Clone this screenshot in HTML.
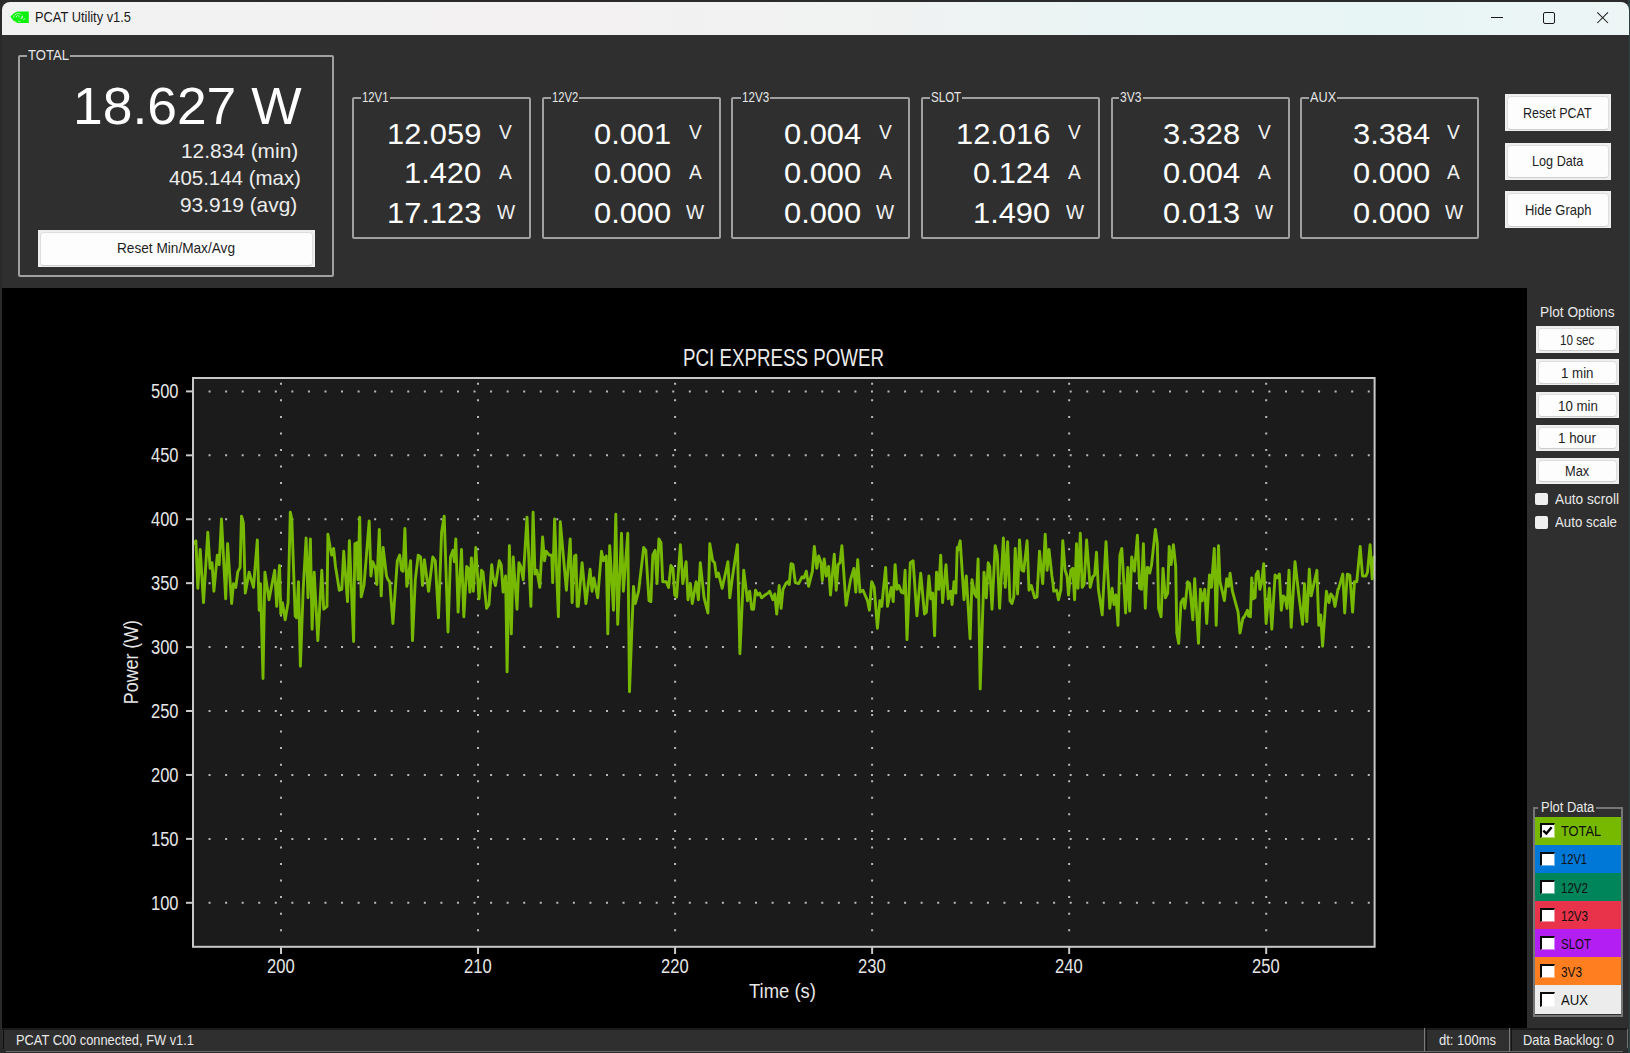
<!DOCTYPE html><html><head><meta charset="utf-8"><title>PCAT Utility v1.5</title><style>
html,body{margin:0;padding:0;width:1630px;height:1053px;overflow:hidden;background:#2a2a2a;}
body{position:relative;font-family:"Liberation Sans",sans-serif;}
.t{position:absolute;white-space:nowrap;transform-origin:0 0;}
.r{position:absolute;box-sizing:border-box;}
.btn{position:absolute;box-sizing:border-box;background:#eeeeee;}
.btn i{position:absolute;left:2px;top:2px;right:2px;bottom:1.5px;border:1px solid #dedede;border-bottom:1.5px solid #cdcdcd;border-radius:4px;background:#fdfdfd;box-sizing:border-box;}
.gb{position:absolute;box-sizing:border-box;border:2px solid #a0a0a0;border-radius:2px;}
.gl{position:absolute;background:#2f2f2f;height:6px;}
</style></head><body>
<div class="r" style="left:1628px;top:0px;width:2px;height:1053px;background:#2c4346;"></div>
<div class="r" style="left:2px;top:2px;width:1626.5px;height:1050px;background:#2f2f2f;border-radius:8px;"></div>
<div class="r" style="left:2px;top:2px;width:1626.5px;height:33px;background:linear-gradient(90deg,#f2f2f2 0px,#f3f1f2 600px,#f0f2f2 900px,#e9f4f4 1150px,#e8f5f5 1400px,#edf5f5 1626px);border-radius:8px 8px 0 0;"></div>
<svg style="position:absolute;left:8px;top:8px" width="24" height="18" viewBox="0 0 24 18">
<path d="M2.4 8.4 L5.6 5.6 L9.2 3.4 L20.8 3.4 L20.8 14.9 L9.2 14.9 L7.2 13.6 L5.2 12.6 Z" fill="#0af20a"/>
<path d="M5.3 9.8 Q5.8 6.6 8.6 5.8 Q11.6 5.2 13.2 6.4" fill="none" stroke="#aef5ae" stroke-width="0.9"/>
<path d="M7.9 9.6 Q8.6 7.4 10.3 7.2" fill="none" stroke="#b8f7b8" stroke-width="0.9"/>
<path d="M10.2 7.9 L11.7 8.9" fill="none" stroke="#d0f8d0" stroke-width="1"/>
<path d="M14.7 7.6 Q14.6 9.6 12.8 10.6" fill="none" stroke="#d6f8d6" stroke-width="1.1"/>
<path d="M15.3 12 L17.2 10.6" fill="none" stroke="#d0f8d0" stroke-width="1"/>
<path d="M9.8 13.4 L12.8 13.3" fill="none" stroke="#a8f3a8" stroke-width="0.8"/>
</svg>
<span class="t" style="left:35.00px;top:10.20px;font-size:14.54px;line-height:14.54px;color:#1a1a1a;transform:scaleX(0.8848);">PCAT Utility v1.5</span>
<svg style="position:absolute;left:1480px;top:0" width="150" height="35">
<line x1="11" y1="17.5" x2="23" y2="17.5" stroke="#1a1a1a" stroke-width="1"/>
<rect x="63.5" y="12.5" width="11" height="11" rx="1.5" fill="none" stroke="#1a1a1a" stroke-width="1"/>
<path d="M117.3 12.3 L128 23 M128 12.3 L117.3 23" stroke="#1a1a1a" stroke-width="1.05"/>
</svg>
<div class="gb" style="left:18px;top:55px;width:316px;height:221.5px;border-width:2px;border-color:#a0a0a0"></div>
<div class="gl" style="left:27px;top:54px;width:43px;height:4px;background:#2f2f2f"></div>
<span class="t" style="left:28.00px;top:48.20px;font-size:14.54px;line-height:14.54px;color:#e6e6e6;transform:scaleX(0.9012);">TOTAL</span>
<span class="t" style="left:73.10px;top:79.53px;font-size:52.33px;line-height:52.33px;color:#ffffff;transform:scaleX(1.0203);">18.627 W</span>
<span class="t" style="left:181.10px;top:140.63px;font-size:20.06px;line-height:20.06px;color:#ececec;transform:scaleX(1.0415);">12.834 (min)</span>
<span class="t" style="left:168.80px;top:167.63px;font-size:20.06px;line-height:20.06px;color:#ececec;transform:scaleX(1.0207);">405.144 (max)</span>
<span class="t" style="left:180.10px;top:194.53px;font-size:20.06px;line-height:20.06px;color:#ececec;transform:scaleX(1.0415);">93.919 (avg)</span>
<div class="btn" style="left:37.5px;top:229.5px;width:277.0px;height:37.5px"><i></i></div>
<span class="t" style="left:117.00px;top:240.95px;font-size:14.54px;line-height:14.54px;color:#1e1e1e;transform:scaleX(0.9383);">Reset Min/Max/Avg</span>
<div class="gb" style="left:352.1px;top:97px;width:178.89999999999998px;height:142px;border-width:2px;border-color:#a0a0a0"></div>
<div class="gl" style="left:361.4px;top:96px;width:28.5px;height:4px;background:#2f2f2f"></div>
<span class="t" style="left:362.40px;top:90.00px;font-size:14.54px;line-height:14.54px;color:#e6e6e6;transform:scaleX(0.7808);">12V1</span>
<span class="t" style="left:387.21px;top:118.79px;font-size:29.80px;line-height:29.80px;color:#ffffff;transform:scaleX(1.0350);">12.059</span>
<span class="t" style="left:404.32px;top:158.39px;font-size:29.80px;line-height:29.80px;color:#ffffff;transform:scaleX(1.0350);">1.420</span>
<span class="t" style="left:387.21px;top:197.99px;font-size:29.80px;line-height:29.80px;color:#ffffff;transform:scaleX(1.0350);">17.123</span>
<span class="t" style="left:499.20px;top:123.48px;font-size:19.77px;line-height:19.77px;color:#f0f0f0;transform:scaleX(0.9700);">V</span>
<span class="t" style="left:499.20px;top:163.08px;font-size:19.77px;line-height:19.77px;color:#f0f0f0;transform:scaleX(0.9700);">A</span>
<span class="t" style="left:496.54px;top:202.68px;font-size:19.77px;line-height:19.77px;color:#f0f0f0;transform:scaleX(0.9700);">W</span>
<div class="gb" style="left:541.9px;top:97px;width:178.89999999999998px;height:142px;border-width:2px;border-color:#a0a0a0"></div>
<div class="gl" style="left:551.0px;top:96px;width:28.2px;height:4px;background:#2f2f2f"></div>
<span class="t" style="left:552.00px;top:90.00px;font-size:14.54px;line-height:14.54px;color:#e6e6e6;transform:scaleX(0.7720);">12V2</span>
<span class="t" style="left:594.12px;top:118.79px;font-size:29.80px;line-height:29.80px;color:#ffffff;transform:scaleX(1.0350);">0.001</span>
<span class="t" style="left:594.12px;top:158.39px;font-size:29.80px;line-height:29.80px;color:#ffffff;transform:scaleX(1.0350);">0.000</span>
<span class="t" style="left:594.12px;top:197.99px;font-size:29.80px;line-height:29.80px;color:#ffffff;transform:scaleX(1.0350);">0.000</span>
<span class="t" style="left:689.00px;top:123.48px;font-size:19.77px;line-height:19.77px;color:#f0f0f0;transform:scaleX(0.9700);">V</span>
<span class="t" style="left:689.00px;top:163.08px;font-size:19.77px;line-height:19.77px;color:#f0f0f0;transform:scaleX(0.9700);">A</span>
<span class="t" style="left:686.34px;top:202.68px;font-size:19.77px;line-height:19.77px;color:#f0f0f0;transform:scaleX(0.9700);">W</span>
<div class="gb" style="left:731.4px;top:97px;width:178.89999999999998px;height:142px;border-width:2px;border-color:#a0a0a0"></div>
<div class="gl" style="left:740.8px;top:96px;width:29.1px;height:4px;background:#2f2f2f"></div>
<span class="t" style="left:741.80px;top:90.00px;font-size:14.54px;line-height:14.54px;color:#e6e6e6;transform:scaleX(0.7985);">12V3</span>
<span class="t" style="left:783.62px;top:118.79px;font-size:29.80px;line-height:29.80px;color:#ffffff;transform:scaleX(1.0350);">0.004</span>
<span class="t" style="left:783.62px;top:158.39px;font-size:29.80px;line-height:29.80px;color:#ffffff;transform:scaleX(1.0350);">0.000</span>
<span class="t" style="left:783.62px;top:197.99px;font-size:29.80px;line-height:29.80px;color:#ffffff;transform:scaleX(1.0350);">0.000</span>
<span class="t" style="left:878.50px;top:123.48px;font-size:19.77px;line-height:19.77px;color:#f0f0f0;transform:scaleX(0.9700);">V</span>
<span class="t" style="left:878.50px;top:163.08px;font-size:19.77px;line-height:19.77px;color:#f0f0f0;transform:scaleX(0.9700);">A</span>
<span class="t" style="left:875.84px;top:202.68px;font-size:19.77px;line-height:19.77px;color:#f0f0f0;transform:scaleX(0.9700);">W</span>
<div class="gb" style="left:921.1px;top:97px;width:178.89999999999998px;height:142px;border-width:2px;border-color:#a0a0a0"></div>
<div class="gl" style="left:929.7px;top:96px;width:32.2px;height:4px;background:#2f2f2f"></div>
<span class="t" style="left:930.70px;top:90.00px;font-size:14.54px;line-height:14.54px;color:#e6e6e6;transform:scaleX(0.7953);">SLOT</span>
<span class="t" style="left:956.21px;top:118.79px;font-size:29.80px;line-height:29.80px;color:#ffffff;transform:scaleX(1.0350);">12.016</span>
<span class="t" style="left:973.32px;top:158.39px;font-size:29.80px;line-height:29.80px;color:#ffffff;transform:scaleX(1.0350);">0.124</span>
<span class="t" style="left:973.32px;top:197.99px;font-size:29.80px;line-height:29.80px;color:#ffffff;transform:scaleX(1.0350);">1.490</span>
<span class="t" style="left:1068.20px;top:123.48px;font-size:19.77px;line-height:19.77px;color:#f0f0f0;transform:scaleX(0.9700);">V</span>
<span class="t" style="left:1068.20px;top:163.08px;font-size:19.77px;line-height:19.77px;color:#f0f0f0;transform:scaleX(0.9700);">A</span>
<span class="t" style="left:1065.54px;top:202.68px;font-size:19.77px;line-height:19.77px;color:#f0f0f0;transform:scaleX(0.9700);">W</span>
<div class="gb" style="left:1110.9px;top:97px;width:178.89999999999986px;height:142px;border-width:2px;border-color:#a0a0a0"></div>
<div class="gl" style="left:1119.1px;top:96px;width:23.5px;height:4px;background:#2f2f2f"></div>
<span class="t" style="left:1120.10px;top:90.00px;font-size:14.54px;line-height:14.54px;color:#e6e6e6;transform:scaleX(0.8310);">3V3</span>
<span class="t" style="left:1163.12px;top:118.79px;font-size:29.80px;line-height:29.80px;color:#ffffff;transform:scaleX(1.0350);">3.328</span>
<span class="t" style="left:1163.12px;top:158.39px;font-size:29.80px;line-height:29.80px;color:#ffffff;transform:scaleX(1.0350);">0.004</span>
<span class="t" style="left:1163.12px;top:197.99px;font-size:29.80px;line-height:29.80px;color:#ffffff;transform:scaleX(1.0350);">0.013</span>
<span class="t" style="left:1258.00px;top:123.48px;font-size:19.77px;line-height:19.77px;color:#f0f0f0;transform:scaleX(0.9700);">V</span>
<span class="t" style="left:1258.00px;top:163.08px;font-size:19.77px;line-height:19.77px;color:#f0f0f0;transform:scaleX(0.9700);">A</span>
<span class="t" style="left:1255.34px;top:202.68px;font-size:19.77px;line-height:19.77px;color:#f0f0f0;transform:scaleX(0.9700);">W</span>
<div class="gb" style="left:1300.3px;top:97px;width:178.9000000000001px;height:142px;border-width:2px;border-color:#a0a0a0"></div>
<div class="gl" style="left:1309.0px;top:96px;width:28.1px;height:4px;background:#2f2f2f"></div>
<span class="t" style="left:1310.00px;top:90.00px;font-size:14.54px;line-height:14.54px;color:#e6e6e6;transform:scaleX(0.8738);">AUX</span>
<span class="t" style="left:1352.52px;top:118.79px;font-size:29.80px;line-height:29.80px;color:#ffffff;transform:scaleX(1.0350);">3.384</span>
<span class="t" style="left:1352.52px;top:158.39px;font-size:29.80px;line-height:29.80px;color:#ffffff;transform:scaleX(1.0350);">0.000</span>
<span class="t" style="left:1352.52px;top:197.99px;font-size:29.80px;line-height:29.80px;color:#ffffff;transform:scaleX(1.0350);">0.000</span>
<span class="t" style="left:1447.40px;top:123.48px;font-size:19.77px;line-height:19.77px;color:#f0f0f0;transform:scaleX(0.9700);">V</span>
<span class="t" style="left:1447.40px;top:163.08px;font-size:19.77px;line-height:19.77px;color:#f0f0f0;transform:scaleX(0.9700);">A</span>
<span class="t" style="left:1444.74px;top:202.68px;font-size:19.77px;line-height:19.77px;color:#f0f0f0;transform:scaleX(0.9700);">W</span>
<div class="btn" style="left:1505.2px;top:94.1px;width:105.79999999999995px;height:37.099999999999994px"><i></i></div>
<span class="t" style="left:1523.20px;top:105.17px;font-size:15.41px;line-height:15.41px;color:#1e1e1e;transform:scaleX(0.8121);">Reset PCAT</span>
<div class="btn" style="left:1505.2px;top:143px;width:105.79999999999995px;height:36.900000000000006px"><i></i></div>
<span class="t" style="left:1532.40px;top:153.47px;font-size:15.41px;line-height:15.41px;color:#1e1e1e;transform:scaleX(0.8217);">Log Data</span>
<div class="btn" style="left:1505.2px;top:191.3px;width:105.79999999999995px;height:37.0px"><i></i></div>
<span class="t" style="left:1524.90px;top:201.67px;font-size:15.41px;line-height:15.41px;color:#1e1e1e;transform:scaleX(0.8426);">Hide Graph</span>
<div class="r" style="left:2px;top:288.4px;width:1524.5px;height:739.6px;background:#000000;"></div>
<svg style="position:absolute;left:0;top:0" width="1630" height="1053" viewBox="0 0 1630 1053">
<rect x="193.0" y="378.0" width="1181.6" height="568.8" fill="#1b1b1b"/>
<line x1="208.56" y1="391.40" x2="1372.6" y2="391.40" stroke="#b8b8b8" stroke-width="2" stroke-dasharray="2 14.56"/>
<line x1="208.56" y1="455.32" x2="1372.6" y2="455.32" stroke="#b8b8b8" stroke-width="2" stroke-dasharray="2 14.56"/>
<line x1="208.56" y1="519.25" x2="1372.6" y2="519.25" stroke="#b8b8b8" stroke-width="2" stroke-dasharray="2 14.56"/>
<line x1="208.56" y1="583.17" x2="1372.6" y2="583.17" stroke="#b8b8b8" stroke-width="2" stroke-dasharray="2 14.56"/>
<line x1="208.56" y1="647.10" x2="1372.6" y2="647.10" stroke="#b8b8b8" stroke-width="2" stroke-dasharray="2 14.56"/>
<line x1="208.56" y1="711.02" x2="1372.6" y2="711.02" stroke="#b8b8b8" stroke-width="2" stroke-dasharray="2 14.56"/>
<line x1="208.56" y1="774.95" x2="1372.6" y2="774.95" stroke="#b8b8b8" stroke-width="2" stroke-dasharray="2 14.56"/>
<line x1="208.56" y1="838.88" x2="1372.6" y2="838.88" stroke="#b8b8b8" stroke-width="2" stroke-dasharray="2 14.56"/>
<line x1="208.56" y1="902.80" x2="1372.6" y2="902.80" stroke="#b8b8b8" stroke-width="2" stroke-dasharray="2 14.56"/>
<line x1="281.00" y1="931.24" x2="281.00" y2="380.0" stroke="#b8b8b8" stroke-width="2" stroke-dasharray="2 14.56"/>
<line x1="478.04" y1="931.24" x2="478.04" y2="380.0" stroke="#b8b8b8" stroke-width="2" stroke-dasharray="2 14.56"/>
<line x1="675.08" y1="931.24" x2="675.08" y2="380.0" stroke="#b8b8b8" stroke-width="2" stroke-dasharray="2 14.56"/>
<line x1="872.12" y1="931.24" x2="872.12" y2="380.0" stroke="#b8b8b8" stroke-width="2" stroke-dasharray="2 14.56"/>
<line x1="1069.16" y1="931.24" x2="1069.16" y2="380.0" stroke="#b8b8b8" stroke-width="2" stroke-dasharray="2 14.56"/>
<line x1="1266.20" y1="931.24" x2="1266.20" y2="380.0" stroke="#b8b8b8" stroke-width="2" stroke-dasharray="2 14.56"/>
<polyline points="193.5,543.7 195.9,540.8 197.8,588.3 200.2,549.4 203.5,602.6 207.8,532.3 210.1,568.4 212.0,562.7 213.9,591.2 217.3,555.1 219.2,564.6 221.5,519.0 225.7,598.8 227.6,543.7 231.6,603.5 233.5,583.6 235.8,587.4 237.7,572.2 240.1,567.4 241.5,516.1 243.4,522.8 245.3,593.1 249.1,572.2 253.5,587.4 257.3,539.9 259.2,610.2 260.5,583.6 263.0,678.5 264.9,572.2 269.0,599.7 274.7,570.3 276.7,606.4 279.5,565.5 280.8,614.0 282.4,602.6 285.2,619.7 288.1,602.6 290.3,512.3 291.8,519.0 295.2,615.9 296.6,617.8 298.5,581.7 300.4,666.2 303.2,589.3 306.1,538.0 308.0,597.8 310.4,538.9 312.1,629.2 314.2,572.2 317.8,640.6 321.8,570.3 323.7,609.2 327.0,606.4 327.9,534.2 330.2,547.5 331.7,555.1 333.6,548.4 335.5,566.5 339.3,590.2 341.8,589.3 343.7,551.3 347.5,601.6 349.4,540.8 353.6,641.5 354.9,543.7 356.8,542.7 358.0,579.8 359.7,517.1 361.2,596.9 364.0,585.5 369.2,520.9 370.9,576.0 372.6,561.7 375.5,568.4 376.8,584.5 379.3,529.4 381.2,595.9 383.1,547.5 386.5,576.0 388.0,579.8 389.7,581.7 392.9,623.5 397.3,560.8 399.7,555.1 401.6,570.3 403.0,571.2 404.9,528.5 406.8,586.4 410.6,560.8 412.5,640.6 415.3,579.8 418.2,555.1 420.6,557.0 422.5,585.5 424.4,559.8 428.6,591.2 432.8,557.0 435.3,560.8 438.5,617.8 441.6,532.3 444.2,516.1 448.0,632.0 450.5,557.0 453.0,550.3 454.3,561.7 455.8,538.9 458.1,612.1 461.5,549.4 463.8,616.8 466.7,566.5 468.2,568.4 469.9,592.1 471.4,557.9 473.3,591.2 475.8,547.5 479.0,598.8 481.5,570.3 483.0,572.2 483.7,579.8 486.6,608.3 489.0,604.5 491.7,564.6 493.2,577.9 495.5,585.5 499.3,560.8 501.2,564.6 503.1,592.1 505.6,576.0 507.1,671.9 509.4,545.6 511.3,633.9 513.2,557.0 517.0,609.2 518.9,562.7 520.8,566.5 523.2,579.8 527.0,517.1 530.9,606.4 533.1,512.3 535.0,574.1 536.9,570.3 539.8,587.4 542.6,537.0 544.5,560.8 546.1,551.3 549.3,555.1 551.8,555.1 552.7,582.6 554.6,519.0 558.4,616.8 560.3,521.8 566.4,590.2 570.2,538.9 572.1,602.6 574.6,556.0 575.9,555.1 577.2,606.4 578.3,606.4 582.1,562.7 585.9,603.5 590.1,569.3 592.0,591.2 593.9,577.9 597.7,597.8 601.5,551.3 603.4,560.8 606.3,556.0 607.8,633.9 609.7,545.6 613.5,610.2 615.8,514.2 617.7,624.4 621.5,533.2 623.4,591.2 627.8,533.2 629.5,691.8 633.5,586.4 635.4,603.5 638.6,591.2 643.7,547.5 645.8,550.3 649.0,600.7 650.9,601.6 652.8,555.1 655.1,550.3 657.0,583.6 658.9,538.9 661.0,542.7 662.7,581.7 666.2,581.7 668.6,587.4 670.9,565.5 673.0,568.4 674.7,595.0 676.6,596.9 680.4,544.6 682.8,583.6 686.1,561.7 688.0,599.7 690.4,583.6 692.3,603.5 696.1,581.7 698.4,599.7 700.3,562.7 704.1,597.8 707.9,613.0 709.8,543.7 712.7,560.8 714.6,562.7 716.5,576.9 718.4,573.1 722.2,588.3 727.9,561.7 729.8,597.8 732.6,576.0 737.4,544.6 739.9,653.8 743.7,570.3 747.5,600.7 749.7,591.2 751.7,609.2 753.6,609.2 755.5,590.2 757.7,595.0 759.6,593.1 761.5,597.8 765.0,595.0 768.0,593.1 769.7,591.2 772.9,599.7 774.8,594.0 776.7,614.0 779.2,585.5 781.1,608.3 783.0,589.3 785.8,583.6 787.7,581.7 789.2,584.5 791.1,563.6 793.0,564.6 795.3,582.6 798.7,583.6 802.0,576.9 803.9,577.9 806.3,571.2 808.6,586.4 812.4,571.2 814.3,546.5 816.8,568.4 818.7,556.0 821.0,562.7 822.3,580.7 824.2,558.9 826.3,576.0 828.6,566.5 830.5,595.0 834.3,554.1 836.2,590.2 838.1,564.6 840.0,562.7 841.9,545.6 846.1,605.4 850.5,579.8 853.9,568.4 855.8,592.1 857.7,559.8 860.0,592.1 863.0,590.2 867.5,600.7 869.4,610.2 871.7,581.7 874.2,587.4 877.4,628.2 879.9,600.7 881.8,606.4 885.6,567.4 887.5,606.4 891.3,587.4 893.2,601.6 895.1,564.6 897.0,589.3 898.9,585.5 901.3,592.1 903.6,593.1 905.1,570.3 907.0,639.6 910.3,562.7 913.1,560.8 916.9,615.9 920.7,573.1 924.5,614.0 926.4,612.1 928.9,576.0 930.8,598.8 932.7,593.1 934.6,635.8 936.5,572.2 938.8,589.3 940.7,555.1 942.6,602.6 946.0,564.6 948.3,598.8 950.8,591.2 952.1,604.5 954.0,581.7 955.9,593.1 957.2,547.5 957.8,550.3 960.2,540.8 964.0,599.7 966.3,576.0 970.1,638.7 972.0,579.8 974.3,593.1 976.4,596.9 978.1,558.9 980.2,689.0 984.0,572.2 986.3,597.8 988.2,562.7 989.7,566.5 992.0,609.2 995.2,545.6 997.3,555.1 999.6,608.3 1003.4,538.0 1005.3,587.4 1007.6,541.8 1010.0,600.7 1011.9,603.5 1013.8,596.9 1015.2,548.4 1017.6,594.0 1019.5,539.9 1021.8,570.3 1023.7,571.2 1027.1,540.8 1029.0,590.2 1031.3,585.5 1034.7,597.8 1037.0,596.9 1039.5,551.3 1042.7,583.6 1045.2,534.2 1047.1,570.3 1049.0,549.4 1051.9,576.0 1053.0,583.6 1053.7,591.2 1056.6,590.2 1058.5,599.7 1060.9,589.3 1062.8,540.8 1065.1,570.3 1067.0,576.0 1068.5,595.0 1070.8,570.3 1072.7,568.4 1074.6,599.7 1076.5,543.7 1078.0,588.3 1080.3,533.2 1082.2,587.4 1084.1,584.5 1086.6,539.9 1090.2,587.4 1092.7,576.9 1094.6,575.0 1096.5,552.2 1098.4,589.3 1102.2,614.9 1106.0,541.8 1109.8,608.3 1112.1,588.3 1114.0,604.5 1115.9,595.0 1118.0,625.4 1119.9,555.1 1121.8,548.4 1125.6,613.0 1127.8,567.4 1129.7,611.1 1131.7,557.0 1134.5,571.2 1137.4,535.1 1139.6,588.3 1141.5,589.3 1143.4,543.7 1145.3,608.3 1147.2,567.4 1147.8,567.4 1149.7,573.1 1151.6,564.6 1155.4,529.4 1157.3,542.7 1158.6,608.3 1161.1,616.8 1163.0,568.4 1165.4,597.8 1167.7,593.1 1169.2,546.5 1171.1,564.6 1173.4,544.6 1175.7,566.5 1176.8,633.0 1178.7,643.4 1181.0,602.6 1183.3,598.8 1184.8,608.3 1187.7,581.7 1189.6,583.6 1192.8,619.7 1194.7,578.8 1198.5,643.4 1200.4,589.3 1202.3,600.7 1204.8,589.3 1206.7,623.5 1209.5,575.0 1211.4,587.4 1214.3,548.4 1216.2,625.4 1218.5,545.6 1220.0,581.7 1224.4,600.7 1226.7,578.8 1228.6,586.4 1230.1,573.1 1232.4,591.2 1238.1,612.1 1240.0,633.0 1243.0,617.8 1243.7,617.8 1247.5,610.2 1248.5,615.9 1250.4,616.8 1251.7,577.9 1253.2,598.8 1255.1,597.8 1256.1,575.0 1258.0,571.2 1259.9,589.3 1261.8,581.7 1263.7,563.6 1266.1,623.5 1269.4,588.3 1271.8,629.2 1275.1,575.0 1277.0,577.9 1279.4,574.1 1281.3,610.2 1283.2,595.9 1285.1,597.8 1287.0,608.3 1289.0,570.3 1291.2,627.3 1295.0,561.7 1298.8,595.0 1302.6,624.4 1304.5,583.6 1306.8,621.6 1309.3,569.3 1311.2,595.9 1316.9,570.3 1318.8,625.4 1320.7,614.9 1322.6,646.2 1326.4,591.2 1328.9,602.6 1330.8,594.0 1333.1,596.9 1335.0,606.4 1338.0,589.3 1338.4,589.3 1342.8,574.1 1344.7,613.0 1347.3,574.1 1349.8,575.0 1352.6,612.1 1354.5,581.7 1356.8,581.7 1360.2,546.5 1362.5,576.0 1365.9,576.0 1367.5,572.2 1370.1,544.6 1372.2,578.8 1374.0,557.0" fill="none" stroke="#76b900" stroke-width="2.9" stroke-linejoin="round" stroke-linecap="round"/>
<rect x="193.0" y="378.0" width="1181.6" height="568.8" fill="none" stroke="#c8c8c8" stroke-width="2"/>
<line x1="186" y1="391.40" x2="193.0" y2="391.40" stroke="#c8c8c8" stroke-width="2"/>
<line x1="186" y1="455.32" x2="193.0" y2="455.32" stroke="#c8c8c8" stroke-width="2"/>
<line x1="186" y1="519.25" x2="193.0" y2="519.25" stroke="#c8c8c8" stroke-width="2"/>
<line x1="186" y1="583.17" x2="193.0" y2="583.17" stroke="#c8c8c8" stroke-width="2"/>
<line x1="186" y1="647.10" x2="193.0" y2="647.10" stroke="#c8c8c8" stroke-width="2"/>
<line x1="186" y1="711.02" x2="193.0" y2="711.02" stroke="#c8c8c8" stroke-width="2"/>
<line x1="186" y1="774.95" x2="193.0" y2="774.95" stroke="#c8c8c8" stroke-width="2"/>
<line x1="186" y1="838.88" x2="193.0" y2="838.88" stroke="#c8c8c8" stroke-width="2"/>
<line x1="186" y1="902.80" x2="193.0" y2="902.80" stroke="#c8c8c8" stroke-width="2"/>
<line x1="281.00" y1="946.8" x2="281.00" y2="954" stroke="#c8c8c8" stroke-width="2"/>
<line x1="478.04" y1="946.8" x2="478.04" y2="954" stroke="#c8c8c8" stroke-width="2"/>
<line x1="675.08" y1="946.8" x2="675.08" y2="954" stroke="#c8c8c8" stroke-width="2"/>
<line x1="872.12" y1="946.8" x2="872.12" y2="954" stroke="#c8c8c8" stroke-width="2"/>
<line x1="1069.16" y1="946.8" x2="1069.16" y2="954" stroke="#c8c8c8" stroke-width="2"/>
<line x1="1266.20" y1="946.8" x2="1266.20" y2="954" stroke="#c8c8c8" stroke-width="2"/>
</svg>
<span class="t" style="left:682.70px;top:345.96px;font-size:24.27px;line-height:24.27px;color:#ebebeb;transform:scaleX(0.7721);">PCI EXPRESS POWER</span>
<span class="t" style="left:151.30px;top:381.18px;font-size:20.35px;line-height:20.35px;color:#e6e6e6;transform:scaleX(0.8104);">500</span>
<span class="t" style="left:151.30px;top:445.11px;font-size:20.35px;line-height:20.35px;color:#e6e6e6;transform:scaleX(0.8104);">450</span>
<span class="t" style="left:151.30px;top:509.03px;font-size:20.35px;line-height:20.35px;color:#e6e6e6;transform:scaleX(0.8104);">400</span>
<span class="t" style="left:151.30px;top:572.96px;font-size:20.35px;line-height:20.35px;color:#e6e6e6;transform:scaleX(0.8104);">350</span>
<span class="t" style="left:151.30px;top:636.88px;font-size:20.35px;line-height:20.35px;color:#e6e6e6;transform:scaleX(0.8104);">300</span>
<span class="t" style="left:151.30px;top:700.81px;font-size:20.35px;line-height:20.35px;color:#e6e6e6;transform:scaleX(0.8104);">250</span>
<span class="t" style="left:151.30px;top:764.73px;font-size:20.35px;line-height:20.35px;color:#e6e6e6;transform:scaleX(0.8104);">200</span>
<span class="t" style="left:151.30px;top:828.66px;font-size:20.35px;line-height:20.35px;color:#e6e6e6;transform:scaleX(0.8104);">150</span>
<span class="t" style="left:151.30px;top:892.58px;font-size:20.35px;line-height:20.35px;color:#e6e6e6;transform:scaleX(0.8104);">100</span>
<span class="t" style="left:267.20px;top:956.38px;font-size:20.35px;line-height:20.35px;color:#e6e6e6;transform:scaleX(0.8134);">200</span>
<span class="t" style="left:464.24px;top:956.38px;font-size:20.35px;line-height:20.35px;color:#e6e6e6;transform:scaleX(0.8134);">210</span>
<span class="t" style="left:661.28px;top:956.38px;font-size:20.35px;line-height:20.35px;color:#e6e6e6;transform:scaleX(0.8134);">220</span>
<span class="t" style="left:858.32px;top:956.38px;font-size:20.35px;line-height:20.35px;color:#e6e6e6;transform:scaleX(0.8134);">230</span>
<span class="t" style="left:1055.36px;top:956.38px;font-size:20.35px;line-height:20.35px;color:#e6e6e6;transform:scaleX(0.8134);">240</span>
<span class="t" style="left:1252.40px;top:956.38px;font-size:20.35px;line-height:20.35px;color:#e6e6e6;transform:scaleX(0.8134);">250</span>
<span class="t" style="left:748.90px;top:982.40px;font-size:19.62px;line-height:19.62px;color:#e6e6e6;transform:scaleX(0.9406);">Time (s)</span>
<div style="position:absolute;left:0;top:0;width:0;height:0;transform:translate(139.2px,662.2px) rotate(-90deg);transform-origin:0 0">
<span class="t" style="left:-42.15px;top:-16.85px;font-size:19.91px;line-height:19.91px;color:#e6e6e6;transform:scaleX(0.8964);">Power (W)</span>
</div>
<span class="t" style="left:1540.40px;top:305.10px;font-size:14.54px;line-height:14.54px;color:#e8e8e8;transform:scaleX(0.9422);">Plot Options</span>
<div class="btn" style="left:1535.7px;top:326.3px;width:83.5px;height:26.30000000000001px"><i></i></div>
<span class="t" style="left:1560.20px;top:331.99px;font-size:15.26px;line-height:15.26px;color:#1e1e1e;transform:scaleX(0.7669);">10 sec</span>
<div class="btn" style="left:1535.7px;top:359.1px;width:83.5px;height:26.299999999999955px"><i></i></div>
<span class="t" style="left:1561.20px;top:364.79px;font-size:15.26px;line-height:15.26px;color:#1e1e1e;transform:scaleX(0.8710);">1 min</span>
<div class="btn" style="left:1535.7px;top:391.9px;width:83.5px;height:26.30000000000001px"><i></i></div>
<span class="t" style="left:1557.50px;top:397.59px;font-size:15.26px;line-height:15.26px;color:#1e1e1e;transform:scaleX(0.8707);">10 min</span>
<div class="btn" style="left:1535.7px;top:424.7px;width:83.5px;height:26.30000000000001px"><i></i></div>
<span class="t" style="left:1558.45px;top:430.39px;font-size:15.26px;line-height:15.26px;color:#1e1e1e;transform:scaleX(0.8783);">1 hour</span>
<div class="btn" style="left:1535.7px;top:457.5px;width:83.5px;height:26.30000000000001px"><i></i></div>
<span class="t" style="left:1565.35px;top:463.19px;font-size:15.26px;line-height:15.26px;color:#1e1e1e;transform:scaleX(0.8390);">Max</span>
<div class="r" style="left:1535.3px;top:492.80px;width:12.5px;height:12.4px;background:#efefef;border-radius:2px"></div>
<span class="t" style="left:1555.30px;top:491.60px;font-size:14.54px;line-height:14.54px;color:#e8e8e8;transform:scaleX(0.9434);">Auto scroll</span>
<div class="r" style="left:1535.3px;top:516.30px;width:12.5px;height:12.4px;background:#efefef;border-radius:2px"></div>
<span class="t" style="left:1555.30px;top:515.10px;font-size:14.54px;line-height:14.54px;color:#e8e8e8;transform:scaleX(0.9134);">Auto scale</span>
<div class="gb" style="left:1533px;top:807px;width:89.5px;height:210px;border-width:2px;border-color:#767676;border-radius:0"></div>
<div class="gl" style="left:1538px;top:806px;width:58px;height:4px;background:#2f2f2f"></div>
<span class="t" style="left:1540.50px;top:800.92px;font-size:13.81px;line-height:13.81px;color:#e8e8e8;transform:scaleX(0.9398);">Plot Data</span>
<div class="r" style="left:1534.5px;top:816.50px;width:86px;height:28.3px;background:#76b900"></div>
<div class="r" style="left:1540px;top:823.40px;width:14.7px;height:14.2px;background:#ffffff;border-left:2px solid #0a0a0a;border-top:2px solid #0a0a0a;border-right:1.6px solid rgba(255,255,255,0.45);border-bottom:1.6px solid rgba(255,255,255,0.45);background-clip:padding-box"></div>
<svg style="position:absolute;left:1540px;top:823.40px" width="15" height="15"><path d="M3.3 7.6 L6.4 10.6 L11.6 4.3" fill="none" stroke="#000" stroke-width="2.4"/></svg>
<span class="t" style="left:1561.00px;top:824.20px;font-size:14.54px;line-height:14.54px;color:#101010;transform:scaleX(0.8836);">TOTAL</span>
<div class="r" style="left:1534.5px;top:844.66px;width:86px;height:28.3px;background:#0078d7"></div>
<div class="r" style="left:1540px;top:851.56px;width:14.7px;height:14.2px;background:#ffffff;border-left:2px solid #0a0a0a;border-top:2px solid #0a0a0a;border-right:1.6px solid rgba(255,255,255,0.45);border-bottom:1.6px solid rgba(255,255,255,0.45);background-clip:padding-box"></div>
<span class="t" style="left:1561.00px;top:852.36px;font-size:14.54px;line-height:14.54px;color:#101010;transform:scaleX(0.7661);">12V1</span>
<div class="r" style="left:1534.5px;top:872.82px;width:86px;height:28.3px;background:#00845a"></div>
<div class="r" style="left:1540px;top:879.72px;width:14.7px;height:14.2px;background:#ffffff;border-left:2px solid #0a0a0a;border-top:2px solid #0a0a0a;border-right:1.6px solid rgba(255,255,255,0.45);border-bottom:1.6px solid rgba(255,255,255,0.45);background-clip:padding-box"></div>
<span class="t" style="left:1561.00px;top:880.52px;font-size:14.54px;line-height:14.54px;color:#101010;transform:scaleX(0.7955);">12V2</span>
<div class="r" style="left:1534.5px;top:900.98px;width:86px;height:28.3px;background:#e8334b"></div>
<div class="r" style="left:1540px;top:907.88px;width:14.7px;height:14.2px;background:#ffffff;border-left:2px solid #0a0a0a;border-top:2px solid #0a0a0a;border-right:1.6px solid rgba(255,255,255,0.45);border-bottom:1.6px solid rgba(255,255,255,0.45);background-clip:padding-box"></div>
<span class="t" style="left:1561.00px;top:908.68px;font-size:14.54px;line-height:14.54px;color:#101010;transform:scaleX(0.7955);">12V3</span>
<div class="r" style="left:1534.5px;top:929.14px;width:86px;height:28.3px;background:#b31ff2"></div>
<div class="r" style="left:1540px;top:936.04px;width:14.7px;height:14.2px;background:#ffffff;border-left:2px solid #0a0a0a;border-top:2px solid #0a0a0a;border-right:1.6px solid rgba(255,255,255,0.45);border-bottom:1.6px solid rgba(255,255,255,0.45);background-clip:padding-box"></div>
<span class="t" style="left:1561.00px;top:936.84px;font-size:14.54px;line-height:14.54px;color:#101010;transform:scaleX(0.7900);">SLOT</span>
<div class="r" style="left:1534.5px;top:957.30px;width:86px;height:28.3px;background:#ff7f20"></div>
<div class="r" style="left:1540px;top:964.20px;width:14.7px;height:14.2px;background:#ffffff;border-left:2px solid #0a0a0a;border-top:2px solid #0a0a0a;border-right:1.6px solid rgba(255,255,255,0.45);border-bottom:1.6px solid rgba(255,255,255,0.45);background-clip:padding-box"></div>
<span class="t" style="left:1561.00px;top:965.00px;font-size:14.54px;line-height:14.54px;color:#101010;transform:scaleX(0.8117);">3V3</span>
<div class="r" style="left:1534.5px;top:985.46px;width:86px;height:28.3px;background:#ececec"></div>
<div class="r" style="left:1540px;top:992.36px;width:14.7px;height:14.2px;background:#ffffff;border-left:2px solid #0a0a0a;border-top:2px solid #0a0a0a;border-right:1.6px solid rgba(255,255,255,0.45);border-bottom:1.6px solid rgba(255,255,255,0.45);background-clip:padding-box"></div>
<span class="t" style="left:1561.00px;top:993.16px;font-size:14.54px;line-height:14.54px;color:#101010;transform:scaleX(0.9039);">AUX</span>
<div class="r" style="left:2px;top:1027.5px;width:1625px;height:2.5px;background:#1a1a1a;"></div>
<div class="r" style="left:6px;top:1050.5px;width:1617px;height:1.5px;background:#6a6a6a;"></div>
<div class="r" style="left:3px;top:1029px;width:1px;height:20px;background:#0c0c0c;"></div>
<div class="r" style="left:1424px;top:1028px;width:1px;height:23px;background:#7a7a7a"></div>
<div class="r" style="left:1426px;top:1028px;width:1px;height:23px;background:#151515"></div>
<div class="r" style="left:1508.5px;top:1028px;width:1px;height:23px;background:#7a7a7a"></div>
<div class="r" style="left:1511px;top:1028px;width:1px;height:23px;background:#151515"></div>
<div class="r" style="left:1626.5px;top:1029px;width:1.2px;height:19px;background:#707070"></div>
<span class="t" style="left:15.60px;top:1032.90px;font-size:14.54px;line-height:14.54px;color:#e8e8e8;transform:scaleX(0.8837);">PCAT C00 connected, FW v1.1</span>
<span class="t" style="left:1439.00px;top:1032.50px;font-size:14.54px;line-height:14.54px;color:#e8e8e8;transform:scaleX(0.8928);">dt: 100ms</span>
<span class="t" style="left:1523.00px;top:1032.50px;font-size:14.54px;line-height:14.54px;color:#e8e8e8;transform:scaleX(0.8868);">Data Backlog: 0</span>
</body></html>
